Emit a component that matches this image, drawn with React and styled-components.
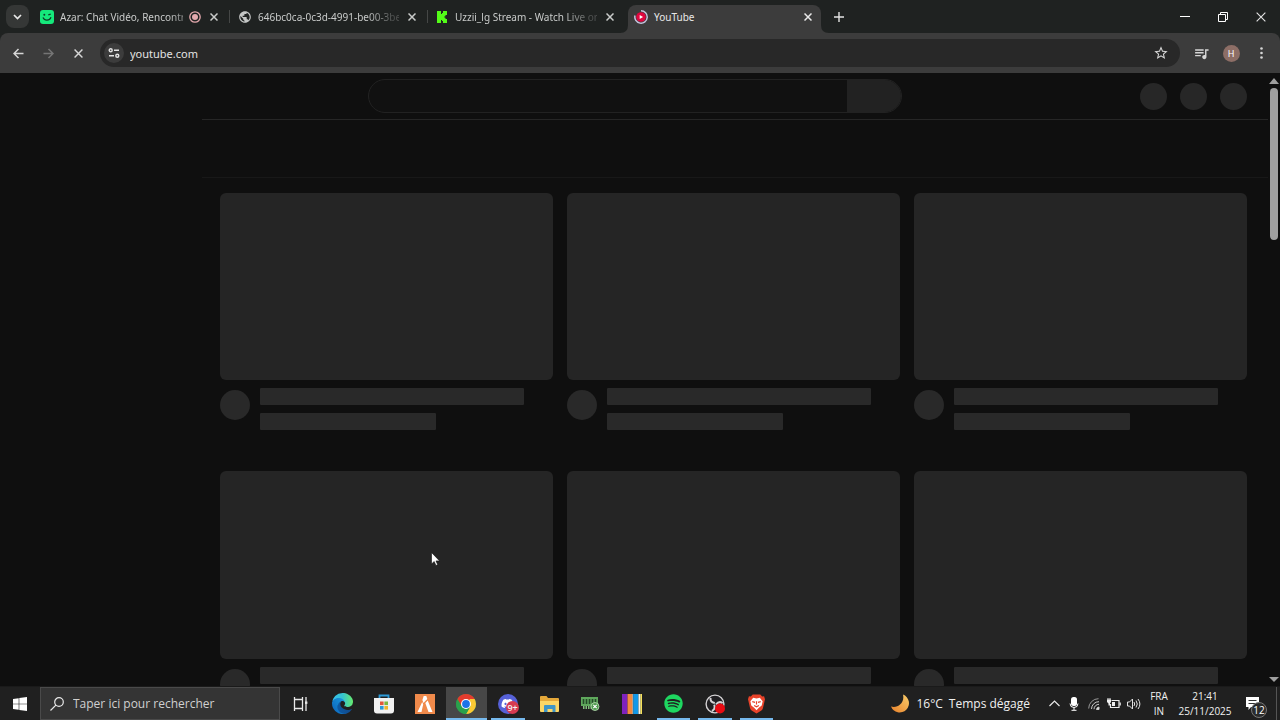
import React from "react";
import styled, { createGlobalStyle, css } from "styled-components";
import { FaDiscord, FaSpotify } from "react-icons/fa";
import { MdStarBorder, MdQueueMusic, MdPublic } from "react-icons/md";

const GlobalStyle = createGlobalStyle`
  * { box-sizing: border-box; }
  body { margin: 0; background: #0f0f0f; overflow: hidden; }
  button, input { font: inherit; color: inherit; border: 0; padding: 0; margin: 0; background: none; outline: none; }
  svg { display: block; flex: none; }
`;

const Screen = styled.div`
  display: flex;
  flex-direction: column;
  height: 100vh;
  overflow: hidden;
  color: #e3e3e3;
  font-family: "Noto Sans", "Open Sans", sans-serif;
`;

/* ---------- browser tab strip ---------- */

const TabStrip = styled.div`
  display: flex;
  height: 33px;
  flex: none;
  background: #1f2221;
`;

const TabSearch = styled.button`
  display: grid;
  place-items: center;
  width: 23px;
  height: 23px;
  margin: 5px 2px 0 6px;
  border-radius: 8px;
  background: #353736;
`;

const TabItem = styled.div`
  position: relative;
  display: flex;
  align-items: center;
  width: 198px;
  padding: 0 8px 0 9px;
  gap: 6px;
  font-size: 10px;
  color: ${(p) => (p.$active ? "#e8e8e8" : "#c9cbca")};
  > * { position: relative; }
  ${(p) =>
    p.$active &&
    css`
      &::before {
        content: "";
        position: absolute;
        inset: 5px 2px 0 3px;
        border-radius: 8px 8px 0 0;
        background: #3c3c3c;
      }
    `}
`;

const TabCorner = styled.svg`
  && { position: absolute; }
  bottom: 0;
  ${(p) => (p.$side === "left" ? "left: -5px;" : "right: -6px;")}
`;

const TabTitle = styled.span`
  flex: 1;
  min-width: 0;
  line-height: 16px;
  white-space: nowrap;
  mask-image: ${(p) => (p.$fade ? "linear-gradient(to right, #000 108px, #0004 134px)" : "none")};
`;

const TabClose = styled.button`
  display: grid;
  place-items: center;
  width: 14px;
  height: 14px;
`;

const TabDivider = styled.i`
  && { position: absolute; }
  right: -1px;
  top: 10px;
  width: 1px;
  height: 13px;
  background: #454746;
`;

const NewTab = styled.button`
  display: grid;
  place-items: center;
  width: 31px;
`;

const WindowControls = styled.div`
  display: flex;
  margin-left: auto;
`;

const WindowButton = styled.button`
  display: grid;
  place-items: center;
  width: 38px;
`;

/* ---------- address bar ---------- */

const ToolbarBack = styled.div`
  flex: none;
  background: #1f2221;
`;

const Toolbar = styled.div`
  display: flex;
  align-items: center;
  height: 40px;
  padding: 0 4px 0 3px;
  border-radius: 8px 8px 0 0;
  background: #3c3c3c;
`;

const ToolButton = styled.button`
  display: grid;
  place-items: center;
  width: 30px;
  height: 28px;
  color: ${(p) => (p.$dim ? "#757575" : "#d6d6d6")};
`;

const Omnibox = styled.div`
  display: flex;
  align-items: center;
  flex: 1;
  min-width: 0;
  height: 28px;
  margin: 0 6px 0 7px;
  padding: 0 4px;
  border-radius: 14px;
  background: #282828;
  font-size: 11px;
`;

const SiteInfo = styled.button`
  display: grid;
  place-items: center;
  width: 20px;
  height: 20px;
  border-radius: 50%;
  background: #3c3c3c;
`;

const UrlInput = styled.input`
  flex: 1;
  min-width: 0;
  margin-left: 6px;
`;

const ProfileBadge = styled.span`
  display: grid;
  place-items: center;
  width: 17px;
  height: 17px;
  border-radius: 50%;
  background: #8d6e66;
  color: #fff;
  font-size: 9px;
`;

/* ---------- page skeleton ---------- */

const Viewport = styled.div`
  display: flex;
  flex: 1;
  min-height: 0;
  background: #0f0f0f;
`;

const Page = styled.div`
  position: relative;
  flex: 1;
  min-width: 0;
  overflow: hidden;
`;

const Masthead = styled.header`
  display: grid;
  grid-template-columns: 1fr minmax(0, 534px) 1fr;
  align-items: center;
  height: 46px;
  padding-left: 2px;
`;

const SearchBox = styled.form`
  grid-column: 2;
  display: flex;
  height: 34px;
  border: 1px solid #222;
  border-radius: 17px;
  overflow: hidden;
  background: #111;
`;

const SearchField = styled.input`
  flex: 1;
  min-width: 0;
`;

const SearchSubmit = styled.button`
  width: 54px;
  background: #222;
`;

const MastheadButtons = styled.div`
  display: flex;
  justify-content: flex-end;
  gap: 13px;
  padding-right: 21px;
`;

const Dot = styled.div`
  flex: none;
  width: ${(p) => p.$size}px;
  height: ${(p) => p.$size}px;
  border-radius: 50%;
  background: ${(p) => p.$color};
`;

const Body = styled.div`
  display: grid;
  grid-template-columns: 202px minmax(0, 1fr);
`;

const Main = styled.main`
  grid-column: 2;
  border-top: 1px solid #262626;
`;

const ChipBar = styled.div`
  height: 58px;
  border-bottom: 1px solid #181818;
`;

const VideoGrid = styled.div`
  display: grid;
  grid-template-columns: repeat(3, minmax(0, 1fr));
  gap: 41px 14px;
  padding: 15px 21px 0 18px;
`;

const Thumb = styled.div`
  aspect-ratio: 16 / 9;
  border-radius: 6px;
  background: #252525;
`;

const Meta = styled.div`
  display: flex;
  gap: 10px;
  padding-top: 8px;
`;

const MetaAvatar = styled.div`
  padding-top: 2px;
`;

const MetaLines = styled.div`
  display: grid;
  flex: 1;
  gap: 8px;
`;

const Line = styled.div`
  width: ${(p) => p.$width};
  height: 17px;
  border-radius: 1px;
  background: #292929;
`;

const ScrollBar = styled.div`
  display: flex;
  flex-direction: column;
  align-items: center;
  justify-content: space-between;
  width: 12px;
  padding: 5px 0 4px;
`;

const ScrollTrack = styled.div`
  flex: 1;
  width: 8px;
  padding: 4px 0;
`;

const ScrollThumb = styled.div`
  height: 26%;
  border-radius: 4px;
  background: #9f9f9f;
`;

const Pointer = styled.svg`
  position: absolute;
  left: 431px;
  top: 479px;
`;

/* ---------- taskbar ---------- */

const Taskbar = styled.footer`
  display: flex;
  flex: none;
  height: 34px;
  background: #202020;
  border-top: 1px solid #1a1a1a;
  color: #f0f0f0;
  font-family: "Open Sans", "Noto Sans", sans-serif;
`;

const StartButton = styled.button`
  display: grid;
  place-items: center;
  width: 40px;
`;

const TaskSearch = styled.label`
  display: flex;
  align-items: center;
  gap: 9px;
  width: 240px;
  padding-left: 9px;
  border: 1px solid #4a4a4a;
  background: #343434;
  font-size: 12px;
`;

const TaskInput = styled.input`
  flex: 1;
  min-width: 0;
  &::placeholder { color: #d0d0d0; opacity: 1; }
`;

const Apps = styled.div`
  display: flex;
  width: 497px;
`;

const AppButton = styled.button`
  position: relative;
  display: grid;
  place-items: center;
  flex: 1;
  background: ${(p) => (p.$active ? "#474747" : "none")};
  ${(p) =>
    (p.$running || p.$active) &&
    css`
      &::after {
        content: "";
        position: absolute;
        left: ${p.$active ? 0 : 4}px;
        right: ${p.$active ? 0 : 4}px;
        bottom: 0;
        height: 2px;
        background: #76b9ed;
      }
    `}
`;

const Tray = styled.div`
  display: flex;
  align-items: stretch;
  margin-left: auto;
`;

const Weather = styled.button`
  display: flex;
  align-items: center;
  gap: 6px;
  padding-right: 14px;
  font-size: 12px;
`;

const TrayButton = styled.button`
  position: relative;
  display: grid;
  place-items: center;
  width: ${(p) => p.$width}px;
`;

const TrayText = styled.button`
  width: ${(p) => p.$width}px;
  font-size: 10px;
  line-height: 15px;
  text-align: center;
`;

const NoticeCount = styled.span`
  position: absolute;
  left: 15px;
  top: 15px;
  display: grid;
  place-items: center;
  width: 16px;
  height: 16px;
  border: 1px solid #777;
  border-radius: 50%;
  background: #2b2b2b;
  color: #fff;
  font-size: 10px;
  line-height: 10px;
`;

const AppBadge = styled.span`
  position: absolute;
  left: 19px;
  top: 14px;
  display: grid;
  place-items: center;
  width: 13px;
  height: 13px;
  border-radius: 50%;
  background: #d63a50;
  font-size: 9px;
  line-height: 9px;
  font-weight: 600;
`;

const Disc = styled.span`
  display: grid;
  place-items: center;
  width: 20px;
  height: 20px;
  border-radius: 50%;
  background: ${(p) => p.$color};
`;

const DesktopEdge = styled.div`
  width: 4px;
  margin-left: 7px;
  border-left: 1px solid #555;
`;

const Cross = ({ size = 8, weight = 1.5 }) => (
  <svg width={size} height={size} viewBox="0 0 8 8" stroke="currentColor" strokeWidth={weight} fill="none">
    <path d="M.5.5l7 7M7.5.5l-7 7" />
  </svg>
);

const AzarIcon = () => (
  <svg width="14" height="14" viewBox="0 0 14 14">
    <rect width="14" height="14" rx="3" fill="#15e87b" />
    <circle cx="4.3" cy="4.8" r="1" fill="#0c3d27" />
    <path d="M8.3 4.8l2.4-.6" stroke="#0c3d27" strokeWidth="1.3" />
    <path d="M3 7.6c1.6 3.6 6.4 3.4 8-.4" stroke="#0c3d27" strokeWidth="1.3" fill="none" />
  </svg>
);

const KickIcon = () => (
  <svg width="13" height="12" viewBox="0 0 13 12">
    <path d="M1 0h4v3h1V2h1V0h4v4H9.500v1.200H8.500v1.600h1V8H11v4H7v-2H6V9H5v3H1z" fill="#53fc18" />
  </svg>
);

const YouTubeLoading = () => (
  <svg width="14" height="14" viewBox="0 0 14 14">
    <circle cx="7" cy="7" r="4.8" fill="#e0063f" />
    <path d="M5.700 5l3.400 2-3.400 2z" fill="#fff" />
    <path d="M7 .8A6.200 6.200 0 1 1 1 5.500" fill="none" stroke="#c5c1dd" strokeWidth="1.5" />
  </svg>
);

const RecordingIcon = () => (
  <svg width="12" height="12" viewBox="0 0 12 12">
    <circle cx="6" cy="6" r="5.2" fill="none" stroke="#e4a9ae" strokeWidth="1.3" />
    <circle cx="6" cy="6" r="3" fill="#e4a9ae" />
  </svg>
);

const Arrow = ({ flip }) => (
  <svg width="11" height="11" viewBox="0 0 11 11" fill="none" stroke="currentColor" strokeWidth="1.5">
    <path d={flip ? "M.5 5.500h9.500M5.500 1l4.500 4.500L5.500 10" : "M10.500 5.500H1M5.500 1L1 5.500 5.500 10"} />
  </svg>
);

const TuneIcon = () => (
  <svg width="12" height="10" viewBox="0 0 12 10" fill="none" stroke="#e3e3e3" strokeWidth="1.4">
    <circle cx="2.7" cy="2.3" r="1.5" />
    <path d="M6 2.300h5M1 7.700h5" />
    <circle cx="9.3" cy="7.7" r="1.5" />
  </svg>
);

const EdgeIcon = () => (
  <svg width="21" height="21" viewBox="0 0 256 256">
    <defs>
      <linearGradient id="edgeDark" x1="0" x2="1"><stop offset="0" stopColor="#0c59a4" /><stop offset="1" stopColor="#114a8b" /></linearGradient>
      <linearGradient id="edgeBlue" x1="1" y1="0" x2="0" y2="1"><stop offset="0" stopColor="#1b9de2" /><stop offset="1" stopColor="#0b62b8" /></linearGradient>
      <linearGradient id="edgeTeal" x1="0" x2="1"><stop offset="0" stopColor="#35c1f1" /><stop offset=".5" stopColor="#36c3cf" /><stop offset="1" stopColor="#66eb6e" /></linearGradient>
    </defs>
    <path fill="url(#edgeDark)" d="M235.700 195.500a93.700 93.700 0 0 1-10.600 4.700 101.900 101.900 0 0 1-35.900 6.400c-47.300 0-88.500-32.500-88.500-74.300a31.500 31.500 0 0 1 16.400-27.300c-42.800 1.800-53.800 46.400-53.800 72.500 0 74 68.100 81.400 82.800 81.400 7.900 0 19.800-2.300 27-4.600l1.300-.4a128.300 128.300 0 0 0 66.600-52.800 4 4 0 0 0-5.300-5.600z" />
    <path fill="url(#edgeBlue)" d="M105.700 241.400a79.200 79.200 0 0 1-22.700-21.300 80.700 80.700 0 0 1 29.500-120c3.200-1.500 8.500-4.100 15.600-4a32.400 32.400 0 0 1 25.700 13 31.900 31.900 0 0 1 6.300 18.700c0-.2 24.500-79.600-80-79.600-43.900 0-80 41.600-80 78.200a130.200 130.200 0 0 0 12.100 56 128 128 0 0 0 156.400 67 75.500 75.500 0 0 1-62.800-8z" />
    <path fill="url(#edgeTeal)" d="M152.300 148.900c-.9 1-3.300 2.500-3.300 5.700 0 2.600 1.700 5.100 4.800 7.300 14.400 10 41.500 8.700 41.600 8.700a59.600 59.600 0 0 0 30.300-8.300 61.400 61.400 0 0 0 30.400-52.900c.3-22.400-8-37.300-11.300-43.900C223.500 23.900 177.700 0 128 0A128 128 0 0 0 0 126.200c.5-36.500 36.800-66 80-66 3.500 0 23.500.3 42 10a72.600 72.600 0 0 1 30.900 29.300c6.100 10.600 7.200 24.100 7.200 29.500s-2.700 13.300-7.800 19.900z" />
  </svg>
);

const StoreIcon = () => (
  <svg width="20" height="20" viewBox="0 0 20 20">
    <path d="M5.500 5V1.500h9V5" fill="none" stroke="#2c9ad8" strokeWidth="1.8" />
    <path d="M0 4h20v12.500q0 3-3 3H3q-3 0-3-3z" fill="#f1f1f1" />
    <path d="M6 7.500h3.600v3.600H6z" fill="#e2573b" />
    <path d="M10.400 7.500H14v3.600h-3.600z" fill="#7cb83f" />
    <path d="M6 12h3.600v3.600H6z" fill="#2c9ad8" />
    <path d="M10.400 12H14v3.600h-3.600z" fill="#f0b52c" />
  </svg>
);

const FiveMIcon = () => (
  <svg width="20" height="20" viewBox="0 0 20 20">
    <rect width="20" height="20" fill="#f08a4b" />
    <path d="M8.700 2h2.600l1 3-3.900 3.900-1-2.900zM12.700 6.500L17.500 18h-4L10.300 9zM7.200 8l1 2.300L6.500 18h-4z" fill="#fff" />
  </svg>
);

const ChromeIcon = () => (
  <svg width="20" height="20" viewBox="0 0 20 20">
    <circle cx="10" cy="10" r="10" fill="#2aa14c" />
    <path d="M10 10L1.340 5A10 10 0 0 1 18.660 5H10z" fill="#e33b2e" />
    <path d="M10 5h8.660A10 10 0 0 1 10 20l4.330-7.500z" fill="#fcc934" />
    <path d="M1.340 5l4.330 7.500L10 10l4-5z" fill="#e33b2e" />
    <path d="M1.340 5A10 10 0 0 0 10 20l4.330-7.500-4.330 2-4.330-2z" fill="#2aa14c" />
    <circle cx="10" cy="10" r="5" fill="#fff" />
    <circle cx="10" cy="10" r="3.9" fill="#1a73e8" />
  </svg>
);

const FolderIcon = () => (
  <svg width="19" height="16" viewBox="0 0 19 16">
    <path d="M0 1q0-1 1-1h5.500l1.500 2h10q1 0 1 1v12H0z" fill="#e5a83a" />
    <path d="M0 5h19v10q0 1-1 1H1q-1 0-1-1z" fill="#fbd667" />
    <path d="M4 16v-6q0-1 1-1h9.500q1 0 1 1v6h-3v-3h-5v3z" fill="#3e95c8" />
  </svg>
);

const MemoryIcon = () => (
  <svg width="19" height="15" viewBox="0 0 19 15">
    <path d="M0 1h17v9H0z" fill="#5fa85c" />
    <path d="M2.500 3v5M5.500 3v5M8.500 3v5M11.500 3v5M14.500 3v5" stroke="#244a28" strokeWidth="1.6" />
    <path d="M2 11.500h9" stroke="#82bf7d" strokeWidth="3" strokeDasharray="1.5 1" />
    <circle cx="14" cy="10.5" r="4" fill="#4f9a50" stroke="#bfe2b8" strokeWidth=".8" />
    <path d="M12.300 8.800l3.400 3.400M15.700 8.800l-3.400 3.400" stroke="#fff" strokeWidth="1.2" />
  </svg>
);

const StripesIcon = () => (
  <svg width="20" height="20" viewBox="0 0 20 20">
    <path d="M0 0h5.500v20H0z" fill="#7f22bd" />
    <path d="M5.500 0h5v20h-5z" fill="#f5893c" />
    <path d="M10.500 0h.8v20h-.8z" fill="#f2eee6" />
    <path d="M11.300 0h5.200v20h-5.200z" fill="#1298e8" />
    <path d="M16.500 0h2v20h-2z" fill="#f4f4e8" />
    <path d="M18.500 0H20v20h-1.500z" fill="#f5e15a" />
  </svg>
);

const ObsIcon = () => (
  <svg width="20" height="20" viewBox="0 0 20 20">
    <circle cx="10" cy="10" r="8.9" fill="#201f22" stroke="#d4d2d4" strokeWidth="1.4" />
    <g fill="none" stroke="#d4d2d4" strokeWidth="2">
      <path d="M5.500 3.800q-.5 4.200 4.300 5.200" />
      <path d="M5.500 3.800q-.5 4.200 4.300 5.200" transform="rotate(120 10 10)" />
      <path d="M5.500 3.800q-.5 4.200 4.300 5.200" transform="rotate(240 10 10)" />
    </g>
    <circle cx="15" cy="14.5" r="5" fill="#e90b12" />
  </svg>
);

const BraveIcon = () => (
  <svg width="17" height="20" viewBox="0 0 18 20">
    <path d="M5 0h8l2 2 2-.2 1 3.200-.5 2-1.700 7.500q-.5 1.700-2 2.700L9 20l-4.800-2.800q-1.500-1-2-2.700L.500 7 0 5l1-3.200L3 2z" fill="#e8432a" />
    <path d="M5.500 3.500L9 4.200l3.500-.7 3 3.500-1 4.500-3 2.500L9 16.500 6.500 14l-3-2.500-1-4.500z" fill="#fff" />
    <path d="M4.500 7.500l3 .8M13.500 7.500l-3 .8M9 7v3.500M6.500 11.500L9 13l2.500-1.500" stroke="#e8432a" strokeWidth="1.2" fill="none" />
  </svg>
);

const TaskViewIcon = () => (
  <svg width="15" height="14" viewBox="0 0 15 14" fill="none" stroke="#e8e8e8" strokeWidth="1.3">
    <path d="M1.500 0v2.500h8V0M1.500 14v-2.500h8V14M1.500 2.500v9M9.500 2.500v9M13 0v14" />
    <path d="M12 4.500h2.400v2.400H12z" fill="#e8e8e8" stroke="none" />
  </svg>
);

const MoonIcon = () => (
  <svg width="19" height="19" viewBox="0 0 19 19">
    <defs><linearGradient id="moon" x1="0" y1="1" x2="1" y2="0"><stop offset="0" stopColor="#e8802a" /><stop offset="1" stopColor="#f9ce6b" /></linearGradient></defs>
    <path d="M12 .5a9.300 9.300 0 1 1-12 12C6 14.500 14 9.500 12 .5z" fill="url(#moon)" />
  </svg>
);

const WifiIcon = () => (
  <svg width="12" height="12" viewBox="0 0 12 12" fill="none" stroke="#c9c9c9">
    <path d="M.7 10.500A9.800 9.800 0 0 1 10.500.7" stroke="#999" />
    <path d="M3.500 11A7.300 7.300 0 0 1 11 3.700M6 11.200A5 5 0 0 1 11 6.300" />
    <path d="M8.500 11.500A2.700 2.700 0 0 1 11 9v2.500z" fill="#eee" />
  </svg>
);

const BatteryIcon = () => (
  <svg width="14" height="11" viewBox="0 0 14 11">
    <path d="M4.500 2.500h7.500v7H3.500V6" fill="none" stroke="#eee" strokeWidth="1.2" />
    <path d="M12.500 4.500h1.300v3h-1.300zM5 4h3v4H5z" fill="#eee" />
    <path d="M0 1.500h4v2.500L3 5.500v2H1.500v-2L0 4zM.5 0h1v2h-1zM2.500 0h1v2h-1z" fill="#eee" />
  </svg>
);

const VolumeIcon = () => (
  <svg width="14" height="12" viewBox="0 0 14 12" fill="none" stroke="#e3e3e3">
    <path d="M.5 4v4h2l3 3V1l-3 3zM7 4q1.400 2 0 4M9 2.500q2.600 3.500 0 7M11 1q3.800 5 0 10" />
  </svg>
);

const MicIcon = () => (
  <svg width="10" height="14" viewBox="0 0 10 14">
    <rect x="2" y="0" width="6" height="9" rx="2.500" fill="#fff" />
    <path d="M1 6.500Q1 10.500 5 10.500T9 6.500M5 10.500V13M2.500 13.300h5" fill="none" stroke="#fff" />
  </svg>
);

const tabs = [
  { title: "Azar: Chat Vidéo, Rencontr", icon: <AzarIcon />, recording: true, divider: true, fade: true },
  { title: "646bc0ca-0c3d-4991-be00-3be", icon: <MdPublic size={14} color="#c4c6c5" />, divider: true, fade: true },
  { title: "Uzzii_lg Stream - Watch Live on", icon: <KickIcon />, fade: true },
  { title: "YouTube", icon: <YouTubeLoading />, active: true },
];

const apps = [
  { name: "Affichage des tâches", icon: <TaskViewIcon /> },
  { name: "Edge", icon: <EdgeIcon /> },
  { name: "Store", icon: <StoreIcon /> },
  { name: "FiveM", icon: <FiveMIcon /> },
  { name: "Chrome", icon: <ChromeIcon />, active: true },
  { name: "Discord", icon: <Disc $color="#5661d8"><FaDiscord size={13} color="#fff" /></Disc>, badge: "9+", running: true },
  { name: "Fichiers", icon: <FolderIcon /> },
  { name: "RAM", icon: <MemoryIcon /> },
  { name: "Bandes", icon: <StripesIcon /> },
  { name: "Spotify", icon: <FaSpotify size={19} color="#1ed760" />, running: true },
  { name: "OBS", icon: <ObsIcon />, running: true },
  { name: "Brave", icon: <BraveIcon />, running: true },
];

export default function App() {
  return (
    <Screen>
      <GlobalStyle />
      <TabStrip>
        <TabSearch aria-label="Rechercher des onglets">
          <svg width="9" height="6" viewBox="0 0 9 6" fill="none" stroke="#e8e8e8" strokeWidth="1.7"><path d="M1 1l3.500 3.500L8 1" /></svg>
        </TabSearch>
        {tabs.map((t) => (
          <TabItem key={t.title} $active={t.active}>
            {t.active && (
              <>
                <TabCorner $side="left" width="8" height="8" viewBox="0 0 8 8"><path d="M8 0v8H0q8 0 8-8z" fill="#3c3c3c" /></TabCorner>
                <TabCorner $side="right" width="8" height="8" viewBox="0 0 8 8"><path d="M0 0v8h8q-8 0-8-8z" fill="#3c3c3c" /></TabCorner>
              </>
            )}
            {t.icon}
            <TabTitle $fade={t.fade}>{t.title}</TabTitle>
            {t.recording && <RecordingIcon />}
            <TabClose aria-label="Fermer l'onglet"><Cross /></TabClose>
            {t.divider && <TabDivider />}
          </TabItem>
        ))}
        <NewTab aria-label="Nouvel onglet">
          <svg width="10" height="10" viewBox="0 0 10 10" stroke="#e3e3e3" strokeWidth="1.4"><path d="M5 0v10M0 5h10" /></svg>
        </NewTab>
        <WindowControls>
          <WindowButton aria-label="Réduire">
            <svg width="10" height="10" viewBox="0 0 10 10" stroke="#fff"><path d="M0 4.500h10" /></svg>
          </WindowButton>
          <WindowButton aria-label="Restaurer">
            <svg width="10" height="10" viewBox="0 0 10 10" fill="none" stroke="#fff"><path d="M.5 2.500h7v7h-7zM2.500 2V.5h7v7H8" /></svg>
          </WindowButton>
          <WindowButton aria-label="Fermer"><Cross size={10} weight={0.9} /></WindowButton>
        </WindowControls>
      </TabStrip>

      <ToolbarBack>
        <Toolbar>
          <ToolButton aria-label="Retour"><Arrow /></ToolButton>
          <ToolButton $dim aria-label="Avancer"><Arrow flip /></ToolButton>
          <ToolButton aria-label="Arrêter"><Cross size={9} weight={1.3} /></ToolButton>
          <Omnibox>
            <SiteInfo aria-label="Informations sur le site"><TuneIcon /></SiteInfo>
            <UrlInput aria-label="Adresse" defaultValue="youtube.com" />
            <ToolButton aria-label="Favori"><MdStarBorder size={16} /></ToolButton>
          </Omnibox>
          <ToolButton aria-label="Contrôle multimédia"><MdQueueMusic size={17} /></ToolButton>
          <ToolButton aria-label="Profil"><ProfileBadge>H</ProfileBadge></ToolButton>
          <ToolButton aria-label="Menu">
            <svg width="3" height="12" viewBox="0 0 3 12" fill="#d6d6d6"><circle cx="1.5" cy="1.5" r="1.3" /><circle cx="1.5" cy="6" r="1.3" /><circle cx="1.5" cy="10.5" r="1.3" /></svg>
          </ToolButton>
        </Toolbar>
      </ToolbarBack>

      <Viewport>
        <Page>
          <Masthead>
            <SearchBox>
              <SearchField aria-label="Rechercher" />
              <SearchSubmit type="button" aria-label="Lancer la recherche" />
            </SearchBox>
            <MastheadButtons>
              {[0, 1, 2].map((i) => <Dot key={i} $size={27} $color="#272727" />)}
            </MastheadButtons>
          </Masthead>
          <Body>
            <Main>
              <ChipBar />
              <VideoGrid>
                {[0, 1, 2, 3, 4, 5].map((i) => (
                  <div key={i}>
                    <Thumb />
                    <Meta>
                      <MetaAvatar><Dot $size={30} $color="#292929" /></MetaAvatar>
                      <MetaLines>
                        <Line $width="90%" />
                        <Line $width="60%" />
                      </MetaLines>
                    </Meta>
                  </div>
                ))}
              </VideoGrid>
            </Main>
          </Body>
          <Pointer width="9" height="14" viewBox="0 0 9 14">
            <path d="M.5.500v11.500l2.700-2.500 1.700 4 1.800-.8L5 8.900h3.600z" fill="#fff" stroke="#111" strokeWidth=".6" />
          </Pointer>
        </Page>
        <ScrollBar>
          <svg width="10" height="6" viewBox="0 0 10 6"><path d="M5 0l5 6H0z" fill="#9f9f9f" /></svg>
          <ScrollTrack><ScrollThumb /></ScrollTrack>
          <svg width="10" height="5" viewBox="0 0 10 5"><path d="M0 0h10L5 5z" fill="#9f9f9f" /></svg>
        </ScrollBar>
      </Viewport>

      <Taskbar>
        <StartButton aria-label="Démarrer">
          <svg width="14" height="14" viewBox="0 0 14 14" fill="#fff"><path d="M0 2l5.700-.8v5.500H0zM6.300 1.100L14 0v6.700H6.300zM0 7.300h5.700v5.500L0 12zM6.300 7.300H14V14l-7.700-1.100z" /></svg>
        </StartButton>
        <TaskSearch>
          <svg width="14" height="14" viewBox="0 0 14 14" fill="none" stroke="#e8e8e8" strokeWidth="1.2"><circle cx="9" cy="5" r="4.3" /><path d="M5.900 8.100L.5 13.500" /></svg>
          <TaskInput aria-label="Recherche Windows" placeholder="Taper ici pour rechercher" />
        </TaskSearch>
        <Apps>
          {apps.map((a) => (
            <AppButton key={a.name} aria-label={a.name} $active={a.active} $running={a.running}>
              {a.icon}
              {a.badge && <AppBadge>{a.badge}</AppBadge>}
            </AppButton>
          ))}
        </Apps>
        <Tray>
          <Weather>
            <MoonIcon />
            <span>16°C</span>
            <span>Temps dégagé</span>
          </Weather>
          <TrayButton $width={20} aria-label="Icônes cachées">
            <svg width="11" height="7" viewBox="0 0 11 7" fill="none" stroke="#e8e8e8" strokeWidth="1.2"><path d="M.5 6l5-5 5 5" /></svg>
          </TrayButton>
          <TrayButton $width={20} aria-label="Micro"><MicIcon /></TrayButton>
          <TrayButton $width={20} aria-label="Wi-Fi"><WifiIcon /></TrayButton>
          <TrayButton $width={20} aria-label="Batterie"><BatteryIcon /></TrayButton>
          <TrayButton $width={20} aria-label="Volume"><VolumeIcon /></TrayButton>
          <TrayText $width={30}>FRA<br />IN</TrayText>
          <TrayText $width={62}>21:41<br />25/11/2025</TrayText>
          <TrayButton $width={33} aria-label="Notifications">
            <svg width="13" height="13" viewBox="0 0 13 13"><path d="M0 0h13v10H5l-2.500 3v-3H0z" fill="#fff" /><path d="M2.500 3.500h8M2.500 6.500h8" stroke="#333" /></svg>
            <NoticeCount>12</NoticeCount>
          </TrayButton>
          <DesktopEdge />
        </Tray>
      </Taskbar>
    </Screen>
  );
}
